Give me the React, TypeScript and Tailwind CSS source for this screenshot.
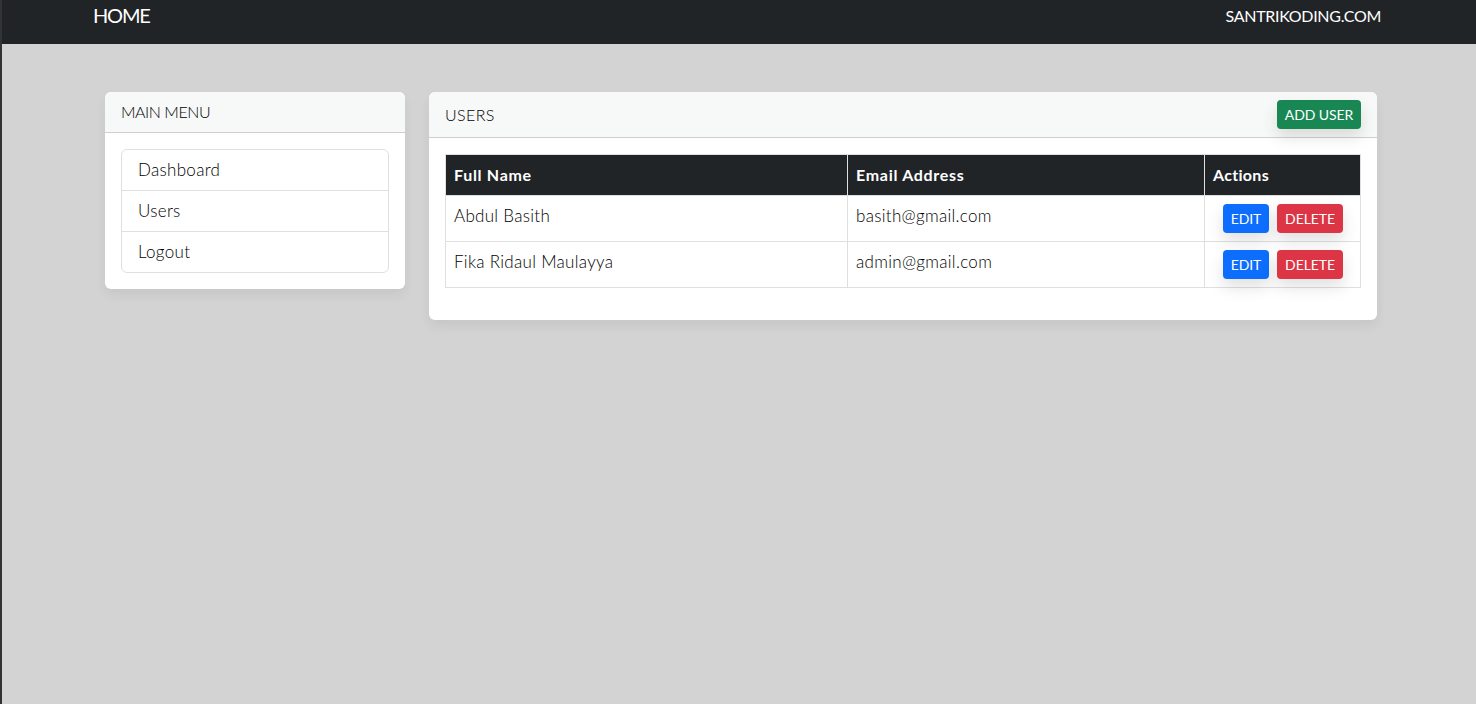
const users = [
  { name: "Abdul Basith", email: "basith@gmail.com" },
  { name: "Fika Ridaul Maulayya", email: "admin@gmail.com" },
];

const menu = ["Dashboard", "Users", "Logout"];

function Button({ label, className }: { label: string; className: string }) {
  return (
    <button
      type="button"
      className={`h-[29px] rounded-[4px] text-center text-[14px] font-normal leading-[27px] tracking-[-0.1px] text-white shadow-[0_8px_16px_rgba(0,0,0,0.12)] ${className}`}
    >
      {label}
    </button>
  );
}

export default function App() {
  return (
    <div className="h-[704px] overflow-hidden border-l-2 border-[#333] bg-[#d3d3d3] font-['Lato','Noto_Sans',sans-serif] font-light text-black">
      <nav className="flex h-[44px] justify-between bg-[#212427] pl-[91px] pr-[95px] font-normal text-white">
        <a className="h-8 text-[20px] leading-[30px] tracking-[-1.2px]">HOME</a>
        <a className="h-8 text-[16px] leading-8 tracking-[-0.3px]">SANTRIKODING.COM</a>
      </nav>

      <div className="flex items-start gap-6 pl-[103px] pt-12">
        <aside className="w-[300px] overflow-hidden rounded-[6px] bg-white shadow-[0_6px_12px_rgba(0,0,0,0.06)]">
          <div className="h-[41px] border-b border-[#cfcfcf] bg-[#f7f8f8] px-4 text-[16px] leading-[40px] tracking-[-0.45px]">
            MAIN MENU
          </div>
          <div className="p-4">
            <ul className="overflow-hidden rounded-[6px] border border-[#dfdfdf]">
              {menu.map((item, i) => (
                <li
                  key={item}
                  className={`px-4 text-[17px] leading-[40px] tracking-[0.3px] ${i > 0 ? "h-[41px] border-t border-[#dfdfdf]" : "h-[40px]"}`}
                >
                  {item}
                </li>
              ))}
            </ul>
          </div>
        </aside>

        <main className="w-[948px] overflow-hidden rounded-[6px] bg-white shadow-[0_6px_12px_rgba(0,0,0,0.06)]">
          <div className="flex h-[46px] items-start justify-between border-b border-[#cfcfcf] bg-[#f7f8f8] px-4 pt-2">
            <span className="text-[16px] leading-[29px] tracking-[0.4px]">USERS</span>
            <Button label="ADD USER" className="w-[84px] bg-[#198754]" />
          </div>
          <div className="px-4 pb-8 pt-4">
            <table className="w-[916px] table-fixed border-collapse text-[17px] tracking-[0.3px]">
              <thead>
                <tr className="h-[41px] bg-[#212427] text-[16px] tracking-[0.7px] text-white">
                  <th className="w-[402px] border border-[#dfdfdf] px-2 text-left font-bold">Full Name</th>
                  <th className="w-[357px] border border-[#dfdfdf] px-2 text-left font-bold">Email Address</th>
                  <th className="border border-[#dfdfdf] px-2 text-left font-bold tracking-[0.3px]">Actions</th>
                </tr>
              </thead>
              <tbody>
                {users.map((u) => (
                  <tr key={u.email} className="h-[46px]">
                    <td className="border border-[#dfdfdf] px-2 pb-[6px] align-middle">{u.name}</td>
                    <td className="border border-[#dfdfdf] px-2 pb-[6px] align-middle">{u.email}</td>
                    <td className="border border-[#dfdfdf] pl-[18px] align-middle">
                      <div className="flex gap-2">
                        <Button label="EDIT" className="w-[46px] bg-[#0d6efd]" />
                        <Button label="DELETE" className="w-[66px] bg-[#dc3545]" />
                      </div>
                    </td>
                  </tr>
                ))}
              </tbody>
            </table>
          </div>
        </main>
      </div>
    </div>
  );
}
